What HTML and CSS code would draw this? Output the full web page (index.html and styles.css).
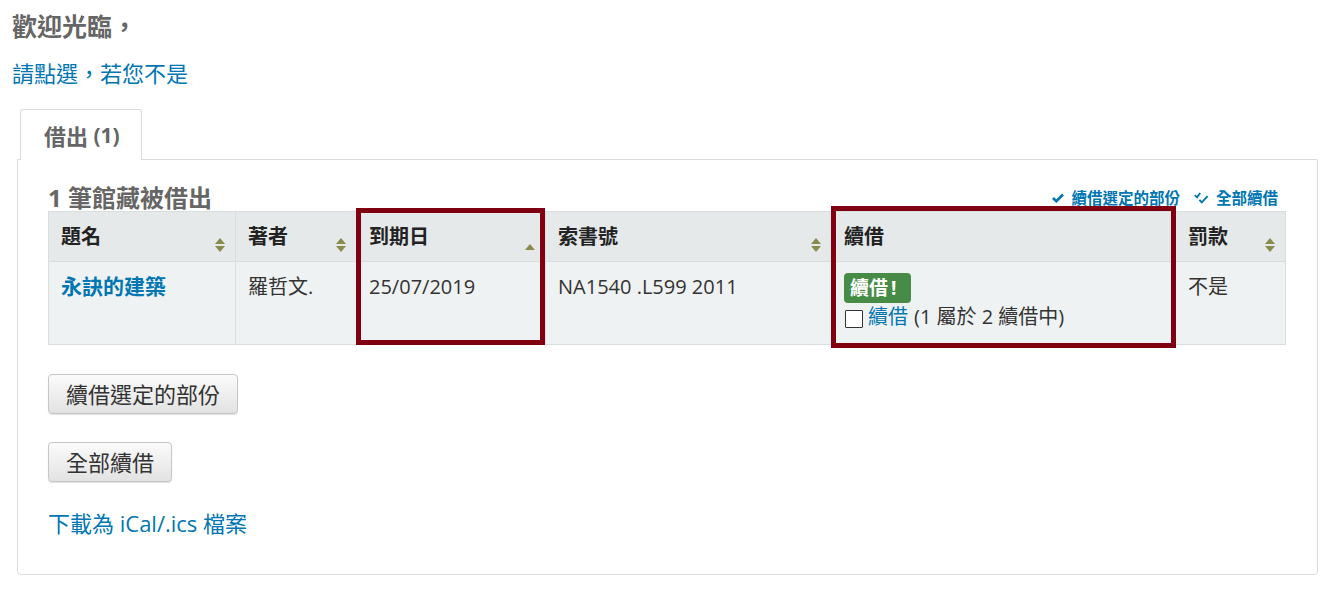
FILE: index.html
```html
<!DOCTYPE html>
<html lang="zh-Hant">
<head>
<meta charset="utf-8">
<title>借出</title>
<link rel="stylesheet" href="styles.css">
</head>
<body>
<div class="page">
  <h1 class="welcome">歡迎光臨<span class="punct">，</span></h1>
  <p class="notyou"><a href="#">請點選<span class="punct">，</span>若您不是</a></p>

  <div class="tabs">
    <div class="tab active"><span class="tab-cjk">借出</span> (1)</div>
  </div>
  <div class="panel">
    <div class="caption-row">
      <h2 class="caption">1 筆館藏被借出</h2>
      <div class="quick-links">
        <a href="#" class="ql"><svg class="ico" viewBox="0 0 12 10" width="12" height="10"><path d="M1 5 L4.3 8.2 L11 1.5" fill="none" stroke="#0076b2" stroke-width="2.6"/></svg>續借選定的部份</a>
        <a href="#" class="ql"><svg class="ico" viewBox="0 0 15 12" width="15" height="12"><path d="M0.8 3.2 L3 5.4 L6.2 1" fill="none" stroke="#0076b2" stroke-width="1.9"/><path d="M5.4 7.8 L7.8 10.3 L13.6 4.2" fill="none" stroke="#0076b2" stroke-width="1.9"/></svg>全部續借</a>
      </div>
    </div>

    <div class="table-wrap">
      <table class="checkouts">
        <colgroup>
          <col class="c-title"><col class="c-author"><col class="c-due"><col class="c-call"><col class="c-renew"><col class="c-fine">
        </colgroup>
        <thead>
          <tr>
            <th><div class="th-in"><span>題名</span><svg class="sort" viewBox="0 0 10 14" width="10" height="14"><path d="M5 0 L10 6 L0 6 Z M0 8 L10 8 L5 14 Z" fill="#8b8b4c"/></svg></div></th>
            <th><div class="th-in"><span>著者</span><svg class="sort" viewBox="0 0 10 14" width="10" height="14"><path d="M5 0 L10 6 L0 6 Z M0 8 L10 8 L5 14 Z" fill="#8b8b4c"/></svg></div></th>
            <th><div class="th-in"><span>到期日</span><svg class="sort up" viewBox="0 0 10 6" width="10" height="6"><path d="M5 0 L10 6 L0 6 Z" fill="#8b8b4c"/></svg></div></th>
            <th><div class="th-in"><span>索書號</span><svg class="sort" viewBox="0 0 10 14" width="10" height="14"><path d="M5 0 L10 6 L0 6 Z M0 8 L10 8 L5 14 Z" fill="#8b8b4c"/></svg></div></th>
            <th><div class="th-in"><span>續借</span></div></th>
            <th><div class="th-in"><span>罰款</span><svg class="sort" viewBox="0 0 10 14" width="10" height="14"><path d="M5 0 L10 6 L0 6 Z M0 8 L10 8 L5 14 Z" fill="#8b8b4c"/></svg></div></th>
          </tr>
        </thead>
        <tbody>
          <tr>
            <td><a href="#" class="title-link">永訣的建築</a></td>
            <td>羅哲文.</td>
            <td>25/07/2019</td>
            <td>NA1540 .L599 2011</td>
            <td>
              <span class="label-ok">續借<span class="bang">!</span></span>
              <div class="renew-line"><input type="checkbox" class="cb"><a href="#">續借</a> (1 屬於 2 續借中)</div>
            </td>
            <td>不是</td>
          </tr>
        </tbody>
      </table>
      <div class="hl hl-due"></div>
      <div class="hl hl-renew"></div>
    </div>

    <div class="actions">
      <button class="btn" type="button">續借選定的部份</button>
      <button class="btn" type="button">全部續借</button>
    </div>
    <p class="ical"><a href="#">下載為 iCal/.ics 檔案</a></p>
  </div>
</div>
</body>
</html>
```

FILE: styles.css
```css
html, body {
  margin: 0;
  padding: 0;
  background: #fff;
}

body {
  font-family: "Open Sans", "Noto Sans CJK TC", sans-serif;
  color: #333;
  font-size: 20px;
  text-spacing-trim: space-all;
}

a {
  color: #0076b2;
  text-decoration: none;
}

.punct {
  font-family: "Noto Sans CJK SC", "Noto Sans CJK TC", sans-serif;
  line-height: 0;
}

.page {
  padding: 11px 10px 0 12px;
}

.welcome {
  margin: 0;
  font-size: 25px;
  line-height: 31px;
  font-weight: 700;
  color: #666;
}

.notyou {
  margin: 18px 0 0;
  font-size: 22px;
  line-height: 26px;
}

.tabs {
  display: flex;
  margin: 23px 0 0 8px;
}

.tab {
  position: relative;
  z-index: 1;
  height: 50px;
  padding: 0 21px 0 23px;
  display: flex;
  align-items: center;
  border: 1px solid #dcdcdc;
  border-bottom: none;
  border-radius: 3px 3px 0 0;
  background: #fff;
  font-size: 21px;
  font-weight: 700;
  color: #666;
  margin-bottom: -1px;
  white-space: pre;
}

.tab-cjk {
  font-size: 22px;
}

.panel {
  margin-left: 5px;
  border: 1px solid #dcdcdc;
  border-radius: 0 0 4px 4px;
  padding: 25px 32px 38px 30px;
}

.caption-row {
  display: flex;
  justify-content: space-between;
  align-items: flex-end;
  height: 26px;
}

.caption {
  margin: 0;
  font-size: 24px;
  line-height: 26px;
  font-weight: 700;
  color: #666;
}

.quick-links {
  display: flex;
  gap: 14px;
  padding: 0 7px 3px 0;
}

.ql {
  display: flex;
  align-items: center;
  gap: 7px;
  font-size: 15.5px;
  line-height: 20px;
  font-weight: 700;
}

.table-wrap {
  position: relative;
}

.checkouts {
  width: 100%;
  border-collapse: collapse;
  table-layout: fixed;
  border: 1px solid #dde1e1;
}

.c-title { width: 187px; }
.c-author { width: 121px; }
.c-due { width: 189px; }
.c-call { width: 286px; }
.c-renew { width: 344px; }
.c-fine { width: 110px; }

.checkouts th {
  background: #e5e9e9;
  border: 1px solid #d8dddd;
  padding: 11px 10px 11px 12px;
  text-align: left;
  vertical-align: top;
  font-size: 20px;
  line-height: 27px;
  font-weight: 700;
  color: #222;
  height: 27px;
}

.th-in {
  display: flex;
  justify-content: space-between;
  align-items: flex-end;
  height: 27px;
}

.sort {
  margin-bottom: -2px;
  flex: none;
}

.sort.up {
  margin-bottom: 0;
}

.checkouts td {
  background: #eff2f2;
  border: 1px solid #dadede;
  padding: 11px 12px 14px;
  vertical-align: top;
  font-size: 20px;
  line-height: 27px;
  color: #333;
}

.title-link {
  font-weight: 700;
  font-size: 21px;
}

.label-ok {
  display: inline-block;
  background: #468b46;
  color: #fff;
  font-weight: 700;
  font-size: 19px;
  line-height: 22px;
  padding: 4px 15px 4px 6px;
  border-radius: 4px;
}

.bang {
  margin-left: 3px;
}

.renew-line {
  display: flex;
  align-items: center;
  line-height: 26px;
  margin-top: 1px;
}

.cb {
  appearance: none;
  -webkit-appearance: none;
  width: 18px;
  height: 18px;
  margin: 4px 5px 0 1px;
  border: 1.5px solid #333;
  border-radius: 1px;
  background: #fff;
  flex: none;
}

.renew-line a {
  margin-right: 6px;
}

.hl {
  position: absolute;
  border: 5px solid #7f0010;
  box-sizing: border-box;
  pointer-events: none;
}

.hl-due {
  left: 308px;
  top: -3px;
  width: 189px;
  height: 137px;
}

.hl-renew {
  left: 783px;
  top: -5px;
  width: 345px;
  height: 142px;
}

.actions {
  display: flex;
  flex-direction: column;
  align-items: flex-start;
  gap: 28px;
  margin-top: 29px;
}

.btn {
  font-family: "Open Sans", "Noto Sans CJK TC", sans-serif;
  font-size: 22px;
  line-height: 26px;
  color: #333;
  height: 40px;
  padding: 0 17px;
  border: 1px solid #c6c6c6;
  border-radius: 4px;
  background: linear-gradient(#fbfbfb, #e2e2e2);
  box-shadow: 0 1px 1px rgba(0,0,0,0.12);
}

.ical {
  margin: 28px 0 0;
  font-size: 22px;
  line-height: 26px;
}
```
